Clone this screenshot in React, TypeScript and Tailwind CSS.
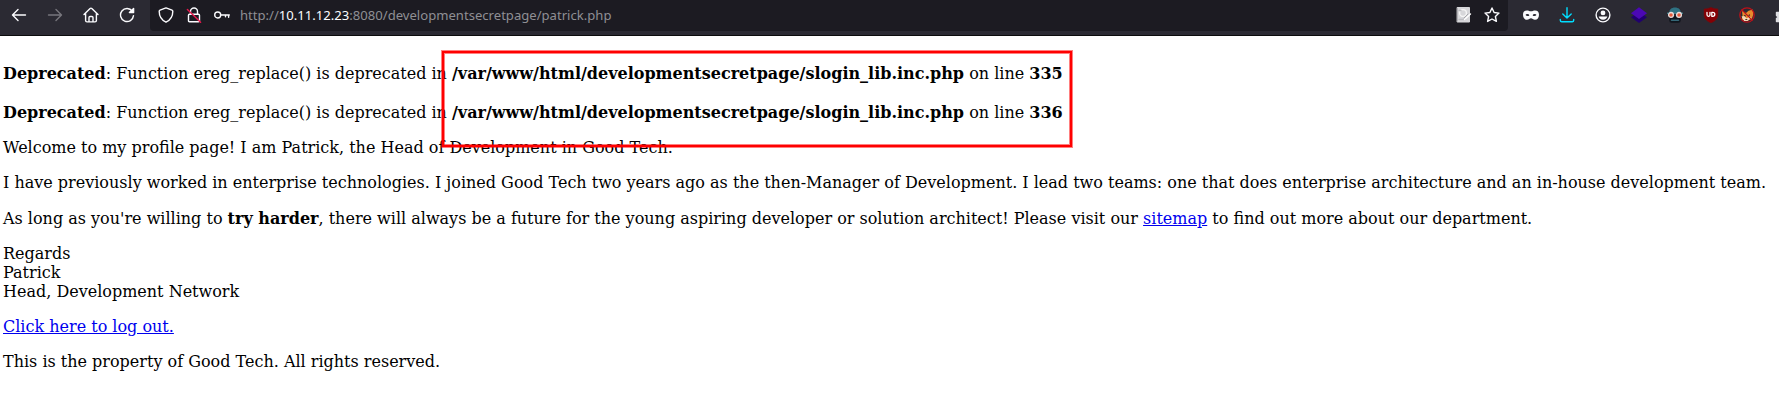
import type { ReactNode } from "react";

function Icon({ children, className = "text-[#fbfbfe]" }: { children: ReactNode; className?: string }) {
  return (
    <svg
      viewBox="0 0 16 16"
      className={`h-4 w-4 shrink-0 ${className}`}
      fill="none"
      stroke="currentColor"
      strokeWidth="1.4"
      strokeLinecap="round"
      strokeLinejoin="round"
    >
      {children}
    </svg>
  );
}

function ToolbarButton({ label, children }: { label: string; children: ReactNode }) {
  return (
    <button aria-label={label} className="flex h-[30px] w-9 shrink-0 items-center justify-center">
      {children}
    </button>
  );
}

function UrlButton({ label, children }: { label: string; children: ReactNode }) {
  return (
    <button aria-label={label} className="flex h-[30px] w-7 shrink-0 items-center justify-center">
      {children}
    </button>
  );
}

function Toolbar() {
  return (
    <header className="flex h-9 overflow-hidden border-b border-[#0c0c0d] bg-[#2b2a33] pl-px">
      <nav className="flex w-[149px] shrink-0">
        <ToolbarButton label="Back">
          <Icon>
            <path d="M14.5 8H1.6M7 2.6 1.5 8 7 13.4" />
          </Icon>
        </ToolbarButton>
        <ToolbarButton label="Forward">
          <Icon className="text-[#77767d]">
            <path d="M1.5 8h12.9M9 2.6 14.5 8 9 13.4" />
          </Icon>
        </ToolbarButton>
        <ToolbarButton label="Home">
          <Icon>
            <path d="M1 7.6 7.1 1.5a1.2 1.2 0 0 1 1.7 0L15 7.6M2.6 6.5v7q0 1.400 1.400 1.400h8q1.400 0 1.400-1.400v-7M6 14.800v-4.300q0-1 1-1h2q1 0 1 1v4.300" />
          </Icon>
        </ToolbarButton>
        <ToolbarButton label="Reload">
          <Icon>
            <path d="M13.3 4.2A6.5 6.5 0 1 0 14.5 8.6" />
            <path d="M14.6 1.4v4.2h-4.2z" fill="currentColor" />
          </Icon>
        </ToolbarButton>
      </nav>

      <div className="flex h-[31px] w-[1358px] shrink-0 items-start rounded-b bg-[#1c1b22] px-[2px]">
        <UrlButton label="Tracking protection">
          <Icon>
            <path d="M8 .9 14 3.2q.8.3.8 1.1C14.8 9.6 12.7 13 8 15.2 3.3 13 1.2 9.6 1.2 4.3q0-.8.8-1.1z" />
          </Icon>
        </UrlButton>
        <UrlButton label="Connection not secure">
          <Icon>
            <path d="M4.5 7V4.500a3.500 3.500 0 0 1 7 0V7M3.500 7.200h9q1 0 1 1v5.600q0 1-1 1h-9q-1 0-1-1V8.200q0-1 1-1z" />
            <path d="M1.400 2.400 14.600 15.200" stroke="#e8174b" />
          </Icon>
        </UrlButton>
        <UrlButton label="Saved logins">
          <Icon>
            <circle cx="3.700" cy="8" r="3" />
            <path d="M6.900 8h8.400M14.600 8v2.200M11.500 8v1.700" />
          </Icon>
        </UrlButton>
        <div className="ml-[4px] flex-1 pt-[5px] font-['Noto_Sans',sans-serif] text-[13.1px] leading-[20px] whitespace-nowrap text-[#8f8f94]">
          http://<span className="text-[#fbfbfe]">10.11.12.23</span>:8080/developmentsecretpage/patrick.php
        </div>
        <UrlButton label="Page notes">
          <Icon className="text-[#d7d7da]">
            <path d="M1.500.5h12v14.500h-12z" fill="currentColor" strokeWidth="1" />
            <circle cx="7" cy="6" r="3.400" stroke="#f5f5f5" />
            <path d="M3 3.500h2M3 12.500h6" stroke="#bdbdc1" />
            <path d="m8.500 12.500 6-5.500" stroke="#fff" />
            <path d="m8 11 4-4" stroke="#a5a5aa" strokeWidth="1" />
          </Icon>
        </UrlButton>
        <UrlButton label="Bookmark">
          <Icon>
            <path d="m8 1 2.100 4.500 4.900.6-3.600 3.400 1 4.900L8 12l-4.400 2.400 1-4.900L1 6.100l4.900-.6z" />
          </Icon>
        </UrlButton>
      </div>

      <div className="ml-[5px] flex shrink-0">
        <ToolbarButton label="Private mask">
          <Icon>
            <path
              fill="currentColor"
              stroke="none"
              fillRule="evenodd"
              d="M4 3.500c1.600 0 2.600.8 4 .8s2.400-.8 4-.8c2.600 0 4 1.500 4 4.300 0 3-1.700 5-4 5-1.900 0-2.600-1.500-4-1.500s-2.100 1.500-4 1.500c-2.300 0-4-2-4-5 0-2.800 1.400-4.300 4-4.300zm.5 3.600c-1 0-1.600.4-1.900 1 .4.600 1 1 1.900 1s1.600-.4 1.900-.9c-.4-.7-1-1.100-1.900-1.100zm7 0c-.9 0-1.500.4-1.900 1.100.3.500 1 .9 1.900.9s1.500-.4 1.900-1c-.3-.600-.9-1-1.900-1z"
            />
          </Icon>
        </ToolbarButton>
        <ToolbarButton label="Downloads">
          <Icon className="text-[#00ddff]">
            <path d="M8 .8v10M3.800 7 8 11l4.200-4M1.300 12.500v.8q0 1.500 1.500 1.500h10.400q1.500 0 1.500-1.500v-.8" />
          </Icon>
        </ToolbarButton>
        <ToolbarButton label="Account">
          <Icon>
            <circle cx="8" cy="8" r="6.900" />
            <circle cx="8" cy="5.900" r="2.400" fill="currentColor" stroke="none" />
            <path d="M3.700 9.500h8.600c-.3 2-2 3.200-4.300 3.200S4 11.500 3.700 9.500z" fill="currentColor" stroke="none" />
          </Icon>
        </ToolbarButton>
        <ToolbarButton label="Layers">
          <Icon>
            <path d="M0 10.300 8 5l8 5.300-8 5.600z" fill="#21006f" stroke="none" />
            <path d="M0 6.300 8 .3l8 6L8 12z" fill="#4b08b4" stroke="none" />
          </Icon>
        </ToolbarButton>
        <ToolbarButton label="Disguise">
          <Icon>
            <path d="M2.300 6C2 2.500 4.500.4 8 .4S14 2.500 13.700 6z" fill="#2f7182" stroke="none" />
            <path d="M2.300 9h11.400v4.500q0 2.300-2.300 2.300H4.600q-2.300 0-2.300-2.300z" fill="#10151d" stroke="none" />
            <path d="M4.500 13.200h7" stroke="#356777" strokeWidth="1.500" />
            <path d="M.6 6.300h14.800" stroke="#3e7b88" strokeWidth="1.500" />
            <circle cx="4" cy="7.900" r="2.400" fill="#e55b3d" stroke="#e8dcda" strokeWidth="1.300" />
            <circle cx="12" cy="7.900" r="2.400" fill="#e55b3d" stroke="#e8dcda" strokeWidth="1.300" />
          </Icon>
        </ToolbarButton>
        <ToolbarButton label="Content blocker">
          <Icon>
            <path d="M8 .2c2 1.300 4.500 1.700 7 1.700v5.500c0 4-2.500 6.500-7 8.500-4.500-2-7-4.500-7-8.500V1.900c2.500 0 5-.4 7-1.700z" fill="#850005" stroke="#6f1013" strokeWidth=".5" />
            <path d="M4 5.300v2.500a1.500 1.500 0 0 0 3 0V5.300M8.800 5.300v4h1a2 2 0 0 0 0-4z" stroke="#fff" strokeWidth="1.300" />
          </Icon>
        </ToolbarButton>
        <ToolbarButton label="Proxy disabled">
          <Icon>
            <path d="M3.500 8.500 3 4l4 2 2.500-2.200L14 2.500l.3 5-1.500 4.500L8 14l-5.500-1.500z" fill="#e98a2c" stroke="none" />
            <path d="m2.500 9.500 3-.5 2 2.500 2.500-1.500 2.500.5L8.500 14H5z" fill="#f3d9b8" stroke="none" />
            <path d="m5.500 8.500 1 .5M10.500 8l-.5.500M6.800 12.500h1" stroke="#4b3029" strokeWidth="1.200" />
            <circle cx="8" cy="8" r="7.200" stroke="#bd1119" strokeWidth="1.300" />
            <path d="m2.900 2.900 10.200 10.200" stroke="#bd1119" strokeWidth="1.300" />
          </Icon>
        </ToolbarButton>
        <ToolbarButton label="Extensions">
          <Icon className="text-[#dedee2]">
            <path d="M1.500 5.500H5v-3q1.500-2.500 3 0v3h5v9H1.500v-3q3-1.500 0-3z" fill="currentColor" />
          </Icon>
        </ToolbarButton>
      </div>
    </header>
  );
}

function Warning({ line }: { line: number }) {
  return (
    <p>
      <b>Deprecated</b>: Function ereg_replace() is deprecated in{" "}
      <b>/var/www/html/developmentsecretpage/slogin_lib.inc.php</b> on line <b>{line}</b>
    </p>
  );
}

export default function App() {
  return (
    <div className="relative h-[404px] overflow-hidden bg-white">
      <Toolbar />
      <main className="pt-7 pl-[3px] font-['DejaVu_Serif',serif] text-[16px] leading-[19px] whitespace-nowrap text-black">
        <div className="flex flex-col gap-5">
          <Warning line={335} />
          <Warning line={336} />
        </div>
        <p className="mt-4">Welcome to my profile page! I am Patrick, the Head of Development in Good Tech.</p>
        <p className="mt-4">
          I have previously worked in enterprise technologies. I joined Good Tech two years ago as the then-Manager of
          Development. I lead two teams: one that does enterprise architecture and an in-house development team.
        </p>
        <p className="mt-[17px]">
          As long as you're willing to <b>try harder</b>, there will always be a future for the young aspiring developer
          or solution architect! Please visit our{" "}
          <a href="#sitemap" className="text-[#0000ee] underline">
            sitemap
          </a>{" "}
          to find out more about our department.
        </p>
        <p className="mt-4">
          Regards
          <br />
          Patrick
          <br />
          Head, Development Network
        </p>
        <p className="mt-4">
          <a href="#logout" className="text-[#0000ee] underline">
            Click here to log out.
          </a>
        </p>
        <p className="mt-4">This is the property of Good Tech. All rights reserved.</p>
      </main>
      <div className="pointer-events-none absolute top-[51px] left-[442px] h-[96px] w-[630px] border-2 border-[#ff0000] shadow-[0_0_0_1px_#ff000080,inset_0_0_0_1px_#ff000080]" />
    </div>
  );
}
